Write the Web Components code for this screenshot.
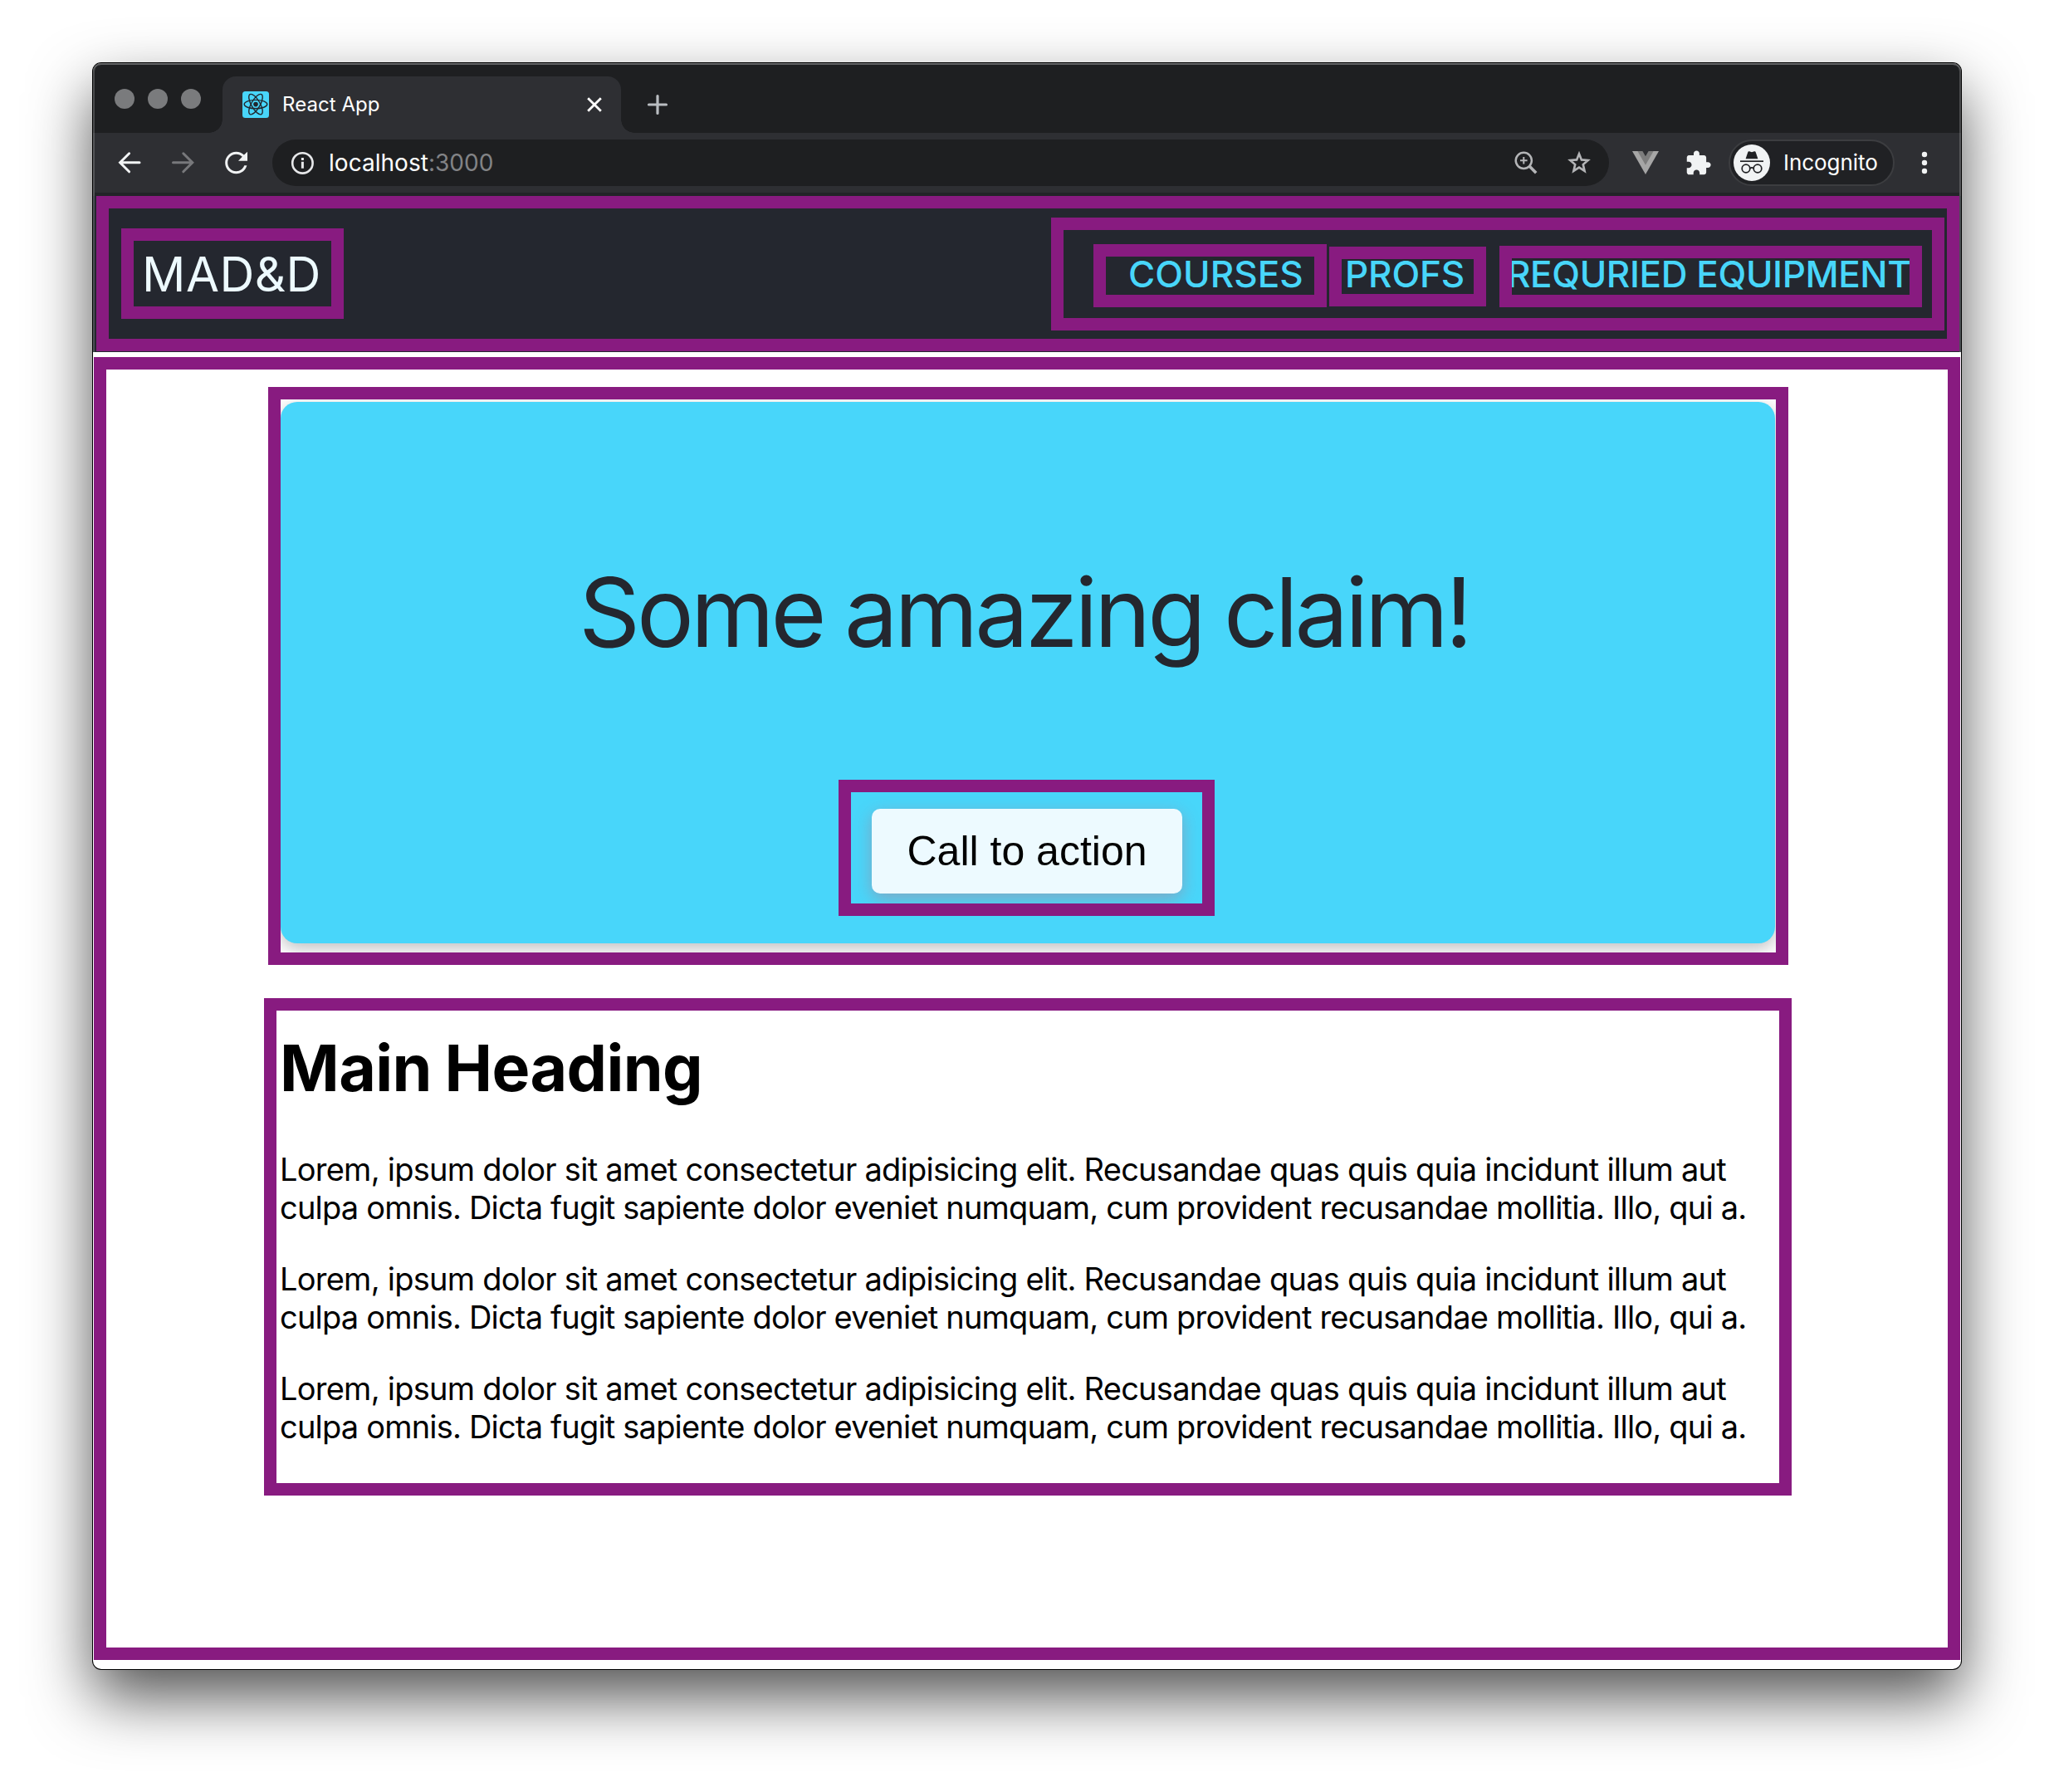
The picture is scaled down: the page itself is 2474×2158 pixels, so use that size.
<!DOCTYPE html>
<html lang="en">
<head>
<meta charset="utf-8">
<title>React App</title>
<style>
  html, body { margin: 0; background: #fff; }
  body {
    box-sizing: border-box;
    width: 2474px;
    height: 2158px;
    padding: 76px 112px 0;
    overflow: hidden;
    font-family: Inter, "Liberation Sans", sans-serif;
  }
</style>
</head>
<body>
<browser-window>
  <tab-strip slot="chrome">React App</tab-strip>
  <tool-bar slot="chrome"><span slot="host">localhost</span><span slot="port">:3000</span><span slot="profile">Incognito</span></tool-bar>
  <demo-page></demo-page>
</browser-window>

<script>
const define = (name, html) => {
  const template = document.createElement('template');
  template.innerHTML = html;
  customElements.define(name, class extends HTMLElement {
    constructor() {
      super();
      this.attachShadow({ mode: 'open' }).append(template.content.cloneNode(true));
    }
  });
};

/* Window frame with its drop shadow */
define('browser-window', `
<style>
  :host {
    display: flex; flex-direction: column;
    width: 2250px; height: 1934px;
    background: #fff;
    border-radius: 10px;
    box-shadow: 0 0 0 1px #000, 0 34px 74px rgba(0,0,0,.68);
  }
</style>
<slot name="chrome"></slot><slot></slot>`);

/* Title bar with the traffic lights and one tab */
define('tab-strip', `
<style>
  :host {
    display: flex; align-items: flex-end; flex: none;
    box-sizing: border-box; height: 84px; padding-left: 26px;
    background: #1e1f21; border-radius: 10px 10px 0 0;
    box-shadow: inset 0 2px #626365, inset 2px 0 #4b4c4e, inset -2px 0 #4b4c4e;
  }
  .lights { display: flex; gap: 16px; align-self: flex-start; margin: 31px 26px 0 0; }
  .lights i { width: 24px; height: 24px; border-radius: 50%; background: #7a7b7d; }
  .tab {
    position: relative; box-sizing: border-box;
    display: flex; align-items: center;
    width: 480px; height: 68px; padding: 0 16px 0 24px;
    background: #2e2f33; border-radius: 16px 16px 0 0;
    color: #fff; font-size: 24px; letter-spacing: .05px; line-height: 32px;
  }
  .tab::before, .tab::after { content: ""; position: absolute; bottom: 0; width: 16px; height: 16px; }
  .tab::before { left: -16px; background: radial-gradient(circle at 0 0, transparent 15.5px, #2e2f33 16px); }
  .tab::after { right: -16px; background: radial-gradient(circle at 100% 0, transparent 15.5px, #2e2f33 16px); }
  .title { flex: 1; margin-left: 16px; }
  svg { flex: none; display: block; width: 32px; height: 32px; fill: none; }
  .plus { margin: 0 0 18px 28px; }
</style>
<div class="lights"><i></i><i></i><i></i></div>
<div class="tab">
  <svg viewBox="0 0 32 32">
    <rect width="32" height="32" rx="3.5" fill="#48d6fa"/>
    <g stroke="#22272e" stroke-width="1.4">
      <ellipse cx="16" cy="15.6" rx="13.8" ry="5.2"/>
      <ellipse cx="16" cy="15.6" rx="13.8" ry="5.2" transform="rotate(60 16 15.6)"/>
      <ellipse cx="16" cy="15.6" rx="13.8" ry="5.2" transform="rotate(120 16 15.6)"/>
    </g>
    <circle cx="16" cy="15.6" r="2.8" fill="#22272e"/>
  </svg>
  <span class="title"><slot></slot></span>
  <svg viewBox="0 0 32 32" stroke="#fff" stroke-width="2.8"><path d="M8.2 8.2 23.8 23.8M23.8 8.2 8.2 23.8"/></svg>
</div>
<svg class="plus" viewBox="0 0 32 32" stroke="#b9bdc1" stroke-width="3.2" stroke-linecap="round"><path d="M16 5.5v21M5.5 16h21"/></svg>`);

/* Navigation buttons, address field, extensions and profile chip */
define('tool-bar', `
<style>
  :host {
    display: flex; align-items: center; flex: none;
    box-sizing: border-box; height: 76px; padding: 0 28px 4px;
    background: linear-gradient(#2e2f33 72px, #232428 72px);
    box-shadow: inset 2px 0 #56575a, inset -2px 0 #56575a;
    color: #fff; line-height: 40px;
  }
  svg { flex: none; display: block; width: 32px; height: 32px; fill: none; stroke-linecap: round; }
  .nav { display: flex; gap: 32px; }
  .field {
    display: flex; align-items: center; box-sizing: border-box;
    width: 1610px; height: 56px; margin-left: 28px; padding: 0 20px;
    background: #1e1f21; border-radius: 28px;
    font-size: 28px;
  }
  .url { flex: 1; margin-left: 16px; letter-spacing: .03px; white-space: nowrap; }
  .port { color: #828386; }
  .field .star { margin-left: 32px; }
  .vue { margin-left: 28px; }
  .puzzle { margin-left: 31px; width: 33px; height: 33px; }
  .chip {
    display: flex; align-items: center; gap: 16px; box-sizing: border-box;
    width: 200px; height: 56px; margin: 0 20px; padding-left: 4px;
    background: #202124; border: 2px solid #3c3d40; border-radius: 28px;
    font-size: 26px; letter-spacing: -.05px;
  }
  .chip svg { width: 44px; height: 44px; }
</style>
<div class="nav">
  <svg viewBox="0 0 32 32" stroke="#f1f3f4" stroke-width="3"><path d="M28 15.8H5M15.6 4.8 4.6 15.8 15.6 26.8"/></svg>
  <svg viewBox="0 0 32 32" stroke="#77787b" stroke-width="3"><path d="M4.5 15.8H27M16.8 4.8 27.8 15.8 16.8 26.8"/></svg>
  <svg viewBox="2.1 2.4 19.2 19.2"><path fill="#f1f3f4" d="M17.65 6.35C16.2 4.9 14.21 4 12 4c-4.42 0-7.99 3.58-7.99 8s3.57 8 7.99 8c3.73 0 6.84-2.55 7.73-6h-1.9c-.82 2.4-3.1 4.2-5.83 4.2-3.42 0-6.2-2.78-6.2-6.2s2.78-6.2 6.2-6.2c1.71 0 3.24.7 4.36 1.84L13.5 10.7H20.1V4l-2.45 2.35z"/></svg>
</div>
<div class="field">
  <svg viewBox="0 0 32 32"><circle cx="16.4" cy="16.4" r="12.2" stroke="#e6e7e9" stroke-width="2.6"/><path fill="#e6e7e9" d="M14.9 14.8h3v8h-3zM14.9 10h3v3h-3z"/></svg>
  <span class="url"><slot name="host"></slot><span class="port"><slot name="port"></slot></span></span>
  <svg viewBox="0 0 32 32" stroke="#b4b5b7"><circle cx="13.3" cy="13.3" r="9.6" stroke-width="2.5"/><path d="M13.3 9v8.6M9 13.3h8.6" stroke-width="2" stroke-linecap="butt"/><path d="M20.3 20.3 28.2 28.2" stroke-width="3.6" stroke-linecap="butt"/></svg>
  <svg class="star" viewBox="0 0 32 32" stroke="#b4b5b7" stroke-width="2.6"><path d="M16 5.2 18.9 12.4 26.7 13 20.8 18.1 22.6 25.9 16 21.6 9.4 25.9 11.2 18.1 5.3 13 13.1 12.4Z"/></svg>
</div>
<svg class="vue" viewBox="0 0 32 32"><path fill="#a6a6a6" d="M0 2h32L16 30z"/><path fill="#7d7d7d" d="M6.4 2h19.2L16 18.8z"/><path fill="#2e2f33" d="M12.4 2h7.2L16 8.2z"/></svg>
<svg class="puzzle" viewBox="0 0 24 24"><path fill="#f1f3f4" d="M20.5 11H19V7c0-1.1-.9-2-2-2h-4V3.5C13 2.12 11.88 1 10.5 1S8 2.12 8 3.5V5H4c-1.1 0-1.99.9-1.99 2v3.8H3.5c1.49 0 2.7 1.21 2.7 2.7s-1.21 2.7-2.7 2.7H2V20c0 1.1.9 2 2 2h3.8v-1.5c0-1.49 1.21-2.7 2.7-2.7 1.49 0 2.7 1.21 2.7 2.7V22H17c1.1 0 2-.9 2-2v-4h1.5c1.38 0 2.5-1.12 2.5-2.5S21.88 11 20.5 11z"/></svg>
<div class="chip">
  <svg viewBox="0 0 44 44">
    <circle cx="22" cy="22" r="22" fill="#f1f3f4"/>
    <path fill="#202124" d="M14.6 17.2 17.2 9.4Q17.6 8 19 8.3L22 9.2 25 8.3Q26.4 8 26.8 9.4L29.4 17.2Z"/>
    <path stroke="#202124" stroke-width="1.7" stroke-linecap="butt" d="M8 20.2h28"/>
    <g stroke="#202124" stroke-width="1.7"><circle cx="15" cy="29" r="4.8"/><circle cx="29" cy="29" r="4.8"/><path d="M19.8 28.6Q22 27.2 24.2 28.6"/></g>
  </svg>
  <slot name="profile"></slot>
</div>
<svg viewBox="0 0 32 32"><g fill="#f1f3f4"><circle cx="16" cy="6" r="3.2"/><circle cx="16" cy="16" r="3.2"/><circle cx="16" cy="26" r="3.2"/></g></svg>`);

/* Purple outline that marks one component of the page */
define('outline-box', `
<style>
  :host {
    display: block; box-sizing: border-box; flex: none;
    border: 15px solid #881b80; overflow: clip;
  }
</style>
<slot></slot>`);

define('site-header', `
<style>
  :host {
    display: block; flex: none; box-sizing: border-box;
    height: 188px; padding: 0 2px 1px 4px;
    background: #24272f;
    box-shadow: inset 2px 0 #4d4f56, inset -2px 0 #4d4f56;
    white-space: nowrap;
  }
  .bar { height: 187px; }
  .row { display: flex; align-items: flex-start; justify-content: space-between; }
  .logo {
    width: 268px; height: 109px; margin: 24px 0 0 15px; padding-left: 10px;
    color: #edfaff; font-size: 58px; line-height: 81px; letter-spacing: .5px;
  }
  nav { display: flex; align-items: flex-start; color: #48d6fa; font-size: 44px; font-weight: 500; }
  .links { width: 1076px; height: 136px; margin: 11px 3px 0 0; }
  .courses { width: 281px; height: 76px; margin: 17px 0 0 36px; padding-left: 27px; line-height: 42px; letter-spacing: .05px; }
  .profs { width: 189px; height: 72px; margin: 20px 0 0 3px; padding-left: 4px; line-height: 36px; letter-spacing: -.15px; }
  .equipment { width: 509px; height: 74px; margin: 19px 0 0 16px; line-height: 38px; letter-spacing: -.4px; }
  .equipment span { margin-left: -6px; }
</style>
<outline-box class="bar">
  <div class="row">
    <outline-box class="logo">MAD&amp;D</outline-box>
    <outline-box class="links">
      <nav>
        <outline-box class="courses">COURSES</outline-box>
        <outline-box class="profs">PROFS</outline-box>
        <outline-box class="equipment"><span>REQURIED EQUIPMENT</span></outline-box>
      </nav>
    </outline-box>
  </div>
</outline-box>`);

define('hero-card', `
<style>
  :host {
    display: flex; flex-direction: column; align-items: center;
    box-sizing: border-box; width: 1800px; height: 652px; margin-top: 3px; padding-top: 184px;
    background: #48d6fa; border-radius: 20px;
    box-shadow: 0 6px 20px rgba(36,39,47,.3);
  }
  .claim { margin-right: 9px; color: #24272f; font-size: 115px; line-height: 140px; letter-spacing: -4px; word-spacing: -3px; white-space: nowrap; }
  .cta { width: 453px; height: 164px; margin: 131px 3px 0 0; }
  button {
    display: block; width: 374px; height: 102px; margin: 20px 0 0 25px; padding: 0;
    border: 0; border-radius: 10px; background: #edfaff; color: #000;
    font: 50px/102px "Liberation Sans", Arial, sans-serif;
    box-shadow: 0 6px 20px rgba(215,95,112,.4);
  }
</style>
<div class="claim"><slot></slot></div>
<outline-box class="cta"><button><slot name="action"></slot></button></outline-box>`);

define('article-text', `
<style>
  :host { display: block; padding: 23px 0 0 4px; color: #000; white-space: nowrap; }
  h1 { margin: 0 0 53px; font-size: 77px; line-height: 92px; font-weight: 700; letter-spacing: -.6px; word-spacing: -2px; }
  p { margin: 0 0 40px; font-size: 38px; line-height: 46px; }
  p span { display: block; letter-spacing: -.745px; }
  p span + span { letter-spacing: -.81px; }
</style>
<h1><slot></slot></h1>
${`<p><span>Lorem, ipsum dolor sit amet consectetur adipisicing elit. Recusandae quas quis quia incidunt illum aut</span><span>culpa omnis. Dicta fugit sapiente dolor eveniet numquam, cum provident recusandae mollitia. Illo, qui a.</span></p>`.repeat(3)}`);

define('demo-page', `
<style>
  :host { display: flex; flex-direction: column; }
  .main { width: 2248px; height: 1569px; margin: 6px 0 0 1px; }
  .hero { width: 1831px; height: 696px; margin: 21px 0 0 195px; }
  .content { width: 1840px; height: 599px; margin: 40px 0 0 190px; }
</style>
<site-header></site-header>
<outline-box class="main">
  <outline-box class="hero"><hero-card>Some amazing claim!<span slot="action">Call to action</span></hero-card></outline-box>
  <outline-box class="content"><article-text>Main Heading</article-text></outline-box>
</outline-box>`);
</script>
</body>
</html>
